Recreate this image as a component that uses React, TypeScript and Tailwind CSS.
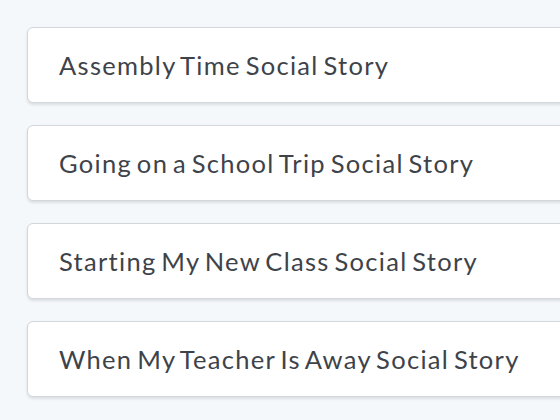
const STORIES = [
  "Assembly Time Social Story",
  "Going on a School Trip Social Story",
  "Starting My New Class Social Story",
  "When My Teacher Is Away Social Story",
];

export default function App() {
  return (
    <div className="h-[420px] w-[560px] overflow-hidden bg-[#f4f8fb] pl-[27px] pt-[27px]">
      <ul className="flex flex-col gap-[22px]">
        {STORIES.map((title) => (
          <li
            key={title}
            className="flex h-[76px] w-[580px] items-center rounded-[6px] border border-[#d3d6da] bg-white pl-[31px] shadow-[0_2px_3px_rgba(0,0,0,0.10)]"
          >
            <span className="font-['Lato',sans-serif] text-[25.5px] tracking-[1.3px] [word-spacing:-3px] text-[#3e434a]">
              {title}
            </span>
          </li>
        ))}
      </ul>
    </div>
  );
}
